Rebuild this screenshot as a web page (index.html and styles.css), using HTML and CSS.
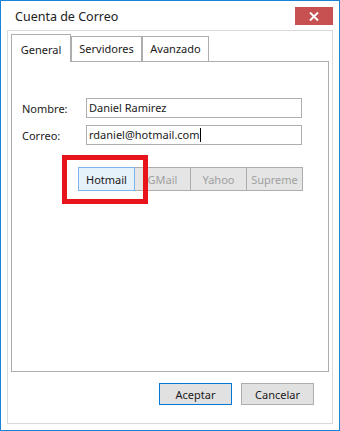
FILE: index.html
```html
<!DOCTYPE html>
<html lang="es">
<head>
  <meta charset="UTF-8" />
  <title>Cuenta de Correo</title>
  <link rel="stylesheet" href="styles.css">
</head>
<body>

<div class="window">
  <div class="titlebar">
    <span class="title">Cuenta de Correo</span>
    <button class="close" type="button">
      <svg width="10" height="9" viewBox="0 0 10 9"><path d="M1 0.5 L9 8.5 M9 0.5 L1 8.5" stroke="#fff" stroke-width="2"/></svg>
    </button>
  </div>

  <div class="frame">
    <div class="tabs">
      <div class="tab active">General</div>
      <div class="tab">Servidores</div>
      <div class="tab">Avanzado</div>
    </div>

    <div class="panel">
      <div class="row">
        <label>Nombre:</label>
        <div class="field">Daniel Ramirez</div>
      </div>
      <div class="row">
        <label>Correo:</label>
        <div class="field">rdaniel@hotmail.com<span class="caret"></span></div>
      </div>

      <div class="providers">
        <button type="button" class="prov selected">Hotmail</button>
        <button type="button" class="prov">GMail</button>
        <button type="button" class="prov">Yahoo</button>
        <button type="button" class="prov">Supreme</button>
      </div>
    </div>

    <div class="actions">
      <button type="button" class="btn default">Aceptar</button>
      <button type="button" class="btn">Cancelar</button>
    </div>
  </div>

  <div class="highlight"></div>
</div>

</body>
</html>
```

FILE: styles.css
```css
* {
  box-sizing: border-box;
}

body {
  margin: 0;
  font-family: "Noto Sans", sans-serif;
  font-size: 11px;
  color: #1a1a1a;
}

.window {
  position: relative;
  width: 340px;
  height: 431px;
  border: 1px solid #1883d7;
  background-color: #fff;
}

.titlebar {
  height: 29px;
  display: flex;
  align-items: flex-start;
  justify-content: space-between;
}

.title {
  font-size: 12.5px;
  margin: 7px 0 0 14px;
  color: #222;
}

.close {
  width: 38px;
  height: 18px;
  margin: 6px 6px 0 0;
  border: none;
  padding: 0;
  background-color: #c75050;
  display: flex;
  align-items: center;
  justify-content: center;
}

.frame {
  margin: 0 6px;
  height: 394px;
  border: 1px solid #d9d9d9;
  padding: 3px 3px 0 3px;
  display: flex;
  flex-direction: column;
}

.tabs {
  display: flex;
  align-items: flex-start;
  height: 27px;
  flex-shrink: 0;
}

.tab {
  height: 25px;
  margin-top: 2px;
  line-height: 23px;
  text-align: center;
  border: 1px solid #adadad;
  border-bottom: none;
  background-color: #fff;
}

.tab:nth-child(1) { width: 60px; }
.tab:nth-child(2) { width: 71px; }
.tab:nth-child(3) { width: 67px; }

.tab.active {
  height: 28px;
  margin-top: 0;
  line-height: 29px;
  position: relative;
  z-index: 1;
}

.panel {
  height: 311px;
  flex-shrink: 0;
  border: 1px solid #adadad;
  padding: 36px 0 0 10px;
}

.row {
  display: flex;
  align-items: center;
  margin-bottom: 7px;
}

.row label {
  width: 64px;
}

.field {
  width: 216px;
  height: 20px;
  line-height: 18px;
  border: 1px solid #adadad;
  padding: 0 2px;
}

.caret {
  display: inline-block;
  width: 1px;
  height: 14px;
  background-color: #000;
  vertical-align: -3px;
}

.providers {
  display: flex;
  margin: 22px 0 0 56px;
}

.prov {
  width: 57px;
  height: 24px;
  margin-right: -1px;
  padding: 0;
  border: 1px solid #adadad;
  background-color: #e5e5e5;
  font-family: inherit;
  font-size: 11px;
  color: #a0a0a0;
}

.prov.selected {
  position: relative;
  z-index: 1;
  border-color: #7eb4ea;
  background-color: #e5f1fb;
  color: #1a1a1a;
}

.actions {
  display: flex;
  justify-content: flex-end;
  gap: 9px;
  margin: 11px 15px 0 0;
}

.btn {
  width: 73px;
  height: 22px;
  padding: 0;
  border: 1px solid #adadad;
  background-color: #e1e1e1;
  font-family: inherit;
  font-size: 11px;
  color: #1a1a1a;
}

.btn.default {
  border-color: #0078d7;
}

.highlight {
  position: absolute;
  left: 61px;
  top: 154px;
  width: 86px;
  height: 49px;
  border: 5px solid #e8141c;
}
```
